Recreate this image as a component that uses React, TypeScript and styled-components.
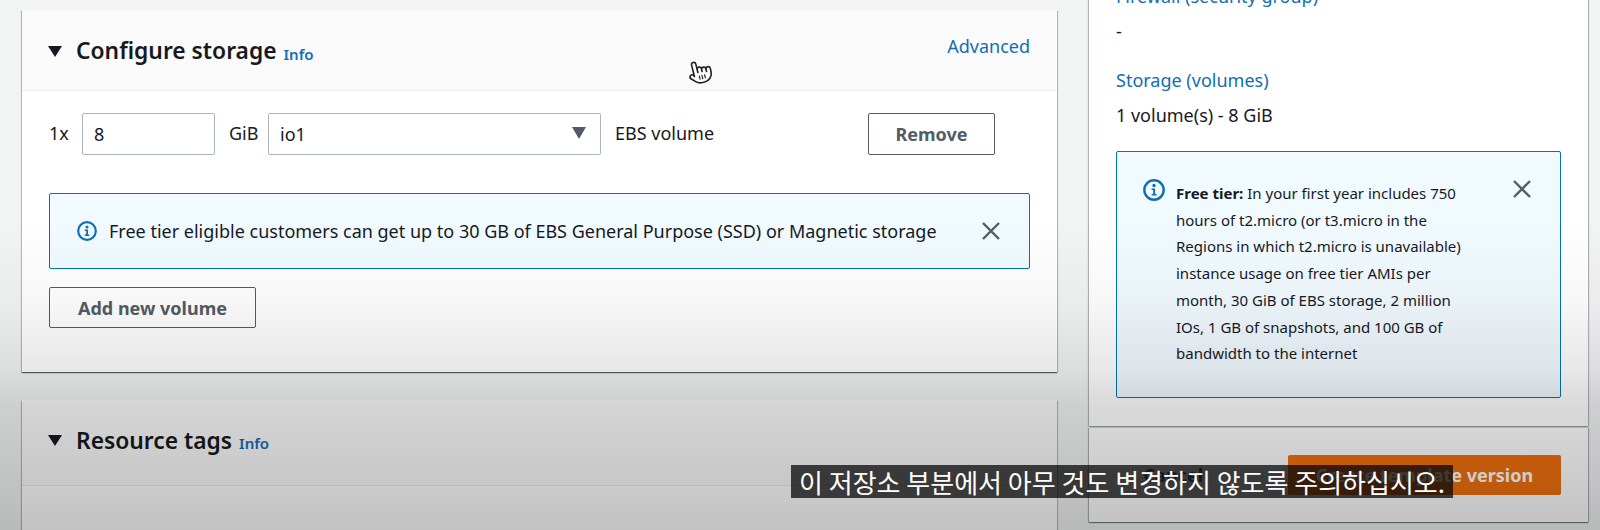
import React from "react";
import styled, { createGlobalStyle } from "styled-components";

const GlobalStyle = createGlobalStyle`
  html, body {
    margin: 0;
    height: 100%;
    background: #f2f3f3;
  }
  * {
    box-sizing: border-box;
  }
`;

const InfoIcon = ({ size = 20 }: { size?: number }) => (
  <svg width={size} height={size} viewBox="0 0 20 20" aria-hidden="true">
    <circle cx="10" cy="10" r="8.8" fill="none" stroke="#0f6fb5" strokeWidth="2.200" />
    <circle cx="10" cy="5.9" r="1.5" fill="#0f6fb5" />
    <path d="M7.8 8.6h3.2v5h1.3v1.500H7.800v-1.500h1.400V10.100H7.800z" fill="#0f6fb5" />
  </svg>
);

const CloseIcon = () => (
  <svg width="20" height="18" viewBox="0 0 20 18" aria-hidden="true">
    <path d="M2 1l16 16M18 1L2 17" fill="none" stroke="#545b64" strokeWidth="2.400" />
  </svg>
);

const HandCursor = () => (
  <svg width="26" height="26" viewBox="0 0 24 24" aria-hidden="true">
    <g transform="rotate(-14 12 12)" fill="#fff" stroke="#222" strokeWidth="1.500" strokeLinecap="round" strokeLinejoin="round">
      <path d="M18 11a2 2 0 1 1 4 0v3a8 8 0 0 1-8 8h-2c-2.800 0-4.500-.86-5.990-2.340l-3.600-3.600a2 2 0 0 1 2.830-2.820L6 14.800V4a2 2 0 0 1 4 0v5a2 2 0 0 1 4 1 2 2 0 0 1 4 1z" />
      <path d="M10 9.500V12M14 10v2M18 11v2" fill="none" />
      <path d="M10.500 15.500v3M13 15.500v3M15.500 15.500v3" fill="none" strokeWidth="1.100" />
    </g>
  </svg>
);

export default function App() {
  return (
    <Page>
      <GlobalStyle />
      <LeftColumn>
        <Card>
          <CardHeader>
            <Caret />
            <Title>Configure storage</Title>
            <InfoLink>Info</InfoLink>
            <AdvancedLink>Advanced</AdvancedLink>
          </CardHeader>
          <CardBody>
            <VolumeRow>
              <RowText>1x</RowText>
              <FieldBox>8</FieldBox>
              <RowText $indent={14}>GiB</RowText>
              <SelectBox>
                io1
                <SelectArrow />
              </SelectBox>
              <RowText $indent={14}>EBS volume</RowText>
              <OutlineButton>Remove</OutlineButton>
            </VolumeRow>
            <WideAlert>
              <InfoIcon />
              <WideAlertText>
                Free tier eligible customers can get up to 30 GB of EBS General Purpose (SSD) or Magnetic storage
              </WideAlertText>
              <CloseIcon />
            </WideAlert>
            <AddButton>Add new volume</AddButton>
          </CardBody>
        </Card>
        <Card>
          <CardHeader $short>
            <Caret />
            <Title>Resource tags</Title>
            <InfoLink>Info</InfoLink>
          </CardHeader>
          <CardBody />
        </Card>
      </LeftColumn>

      <SummaryPanel>
        <SummaryBody>
          <SummaryLabel>Firewall (security group)</SummaryLabel>
          <SummaryValue>-</SummaryValue>
          <SummaryLabel $spaced>Storage (volumes)</SummaryLabel>
          <SummaryValue>1 volume(s) - 8 GiB</SummaryValue>
          <TierAlert>
            <TierIcon>
              <InfoIcon size={22} />
            </TierIcon>
            <TierText>
              <strong>Free tier:</strong> In your first year includes 750 hours of t2.micro (or t3.micro in the
              Regions in which t2.micro is unavailable) instance usage on free tier AMIs per month, 30 GiB of EBS
              storage, 2 million IOs, 1 GB of snapshots, and 100 GB of bandwidth to the internet
            </TierText>
            <TierClose>
              <CloseIcon />
            </TierClose>
          </TierAlert>
        </SummaryBody>
        <SummaryFooter>
          <CancelLink>Cancel</CancelLink>
          <PrimaryButton>Create template version</PrimaryButton>
        </SummaryFooter>
      </SummaryPanel>

      <VideoShade />
      <Pointer>
        <HandCursor />
      </Pointer>
      <Subtitle>이 저장소 부분에서 아무 것도 변경하지 않도록 주의하십시오.</Subtitle>
    </Page>
  );
}

const Page = styled.div`
  position: relative;
  display: flex;
  align-items: flex-start;
  gap: 32px;
  width: 1600px;
  height: 530px;
  padding: 10px 12px 0 22px;
  overflow: hidden;
  background: #f2f3f3;
  color: #16191f;
  font-family: "Noto Sans", "Open Sans", sans-serif;
`;

const LeftColumn = styled.div`
  display: flex;
  flex-direction: column;
  gap: 28px;
  width: 1035px;
  flex-shrink: 0;
`;

const Card = styled.section`
  background: #fff;
  box-shadow: 0 1px 1px rgba(0, 28, 36, 0.5), 1px 1px 1px rgba(0, 28, 36, 0.2), -1px 1px 1px rgba(0, 28, 36, 0.2);
`;

const CardHeader = styled.header<{ $short?: boolean }>`
  position: relative;
  display: flex;
  align-items: center;
  height: ${(p) => (p.$short ? 86 : 81)}px;
  padding: ${(p) => (p.$short ? "0 27px 4px 26px" : "2px 27px 0 26px")};
  background: #fafafa;
  border-bottom: 1px solid #eaeded;
`;

const Caret = styled.span`
  width: 0;
  height: 0;
  margin-right: 14px;
  border-left: 7px solid transparent;
  border-right: 7px solid transparent;
  border-top: 11px solid #16191f;
`;

const Title = styled.h2`
  margin: 0;
  font-size: 22.800px;
  font-weight: 600;
  line-height: 28px;
`;

const InfoLink = styled.a`
  margin: 5px 0 0 7px;
  color: #0f6fb5;
  font-size: 15px;
  font-weight: 600;
`;

const AdvancedLink = styled.a`
  margin: -11px 0 0 auto;
  color: #0f6fb5;
  font-size: 18px;
`;

const CardBody = styled.div`
  min-height: 60px;
  padding: 22px 27px 44px;
`;

const VolumeRow = styled.div`
  display: grid;
  grid-template-columns: 33px 133px 53px 333px 267px 127px;
  align-items: center;
  height: 42px;
`;

const RowText = styled.span<{ $indent?: number }>`
  padding-left: ${(p) => p.$indent ?? 0}px;
  font-size: 18px;
  line-height: 40px;
  align-self: start;
  white-space: nowrap;
`;

const FieldBox = styled.div`
  display: flex;
  align-items: center;
  height: 42px;
  padding-left: 11px;
  background: #fff;
  border: 1px solid #aab7b8;
  border-radius: 2px;
  font-size: 18px;
`;

const SelectBox = styled(FieldBox)`
  justify-content: space-between;
  padding-right: 14px;
`;

const SelectArrow = styled.span`
  width: 0;
  height: 0;
  margin-top: -2px;
  border-left: 7px solid transparent;
  border-right: 7px solid transparent;
  border-top: 12px solid #545b64;
`;

const OutlineButton = styled.button`
  height: 42px;
  padding: 0;
  background: #fff;
  border: 1px solid #545b64;
  border-radius: 2px;
  color: #545b64;
  font-family: inherit;
  font-size: 18px;
  font-weight: 700;
`;

const WideAlert = styled.div`
  display: flex;
  align-items: center;
  height: 76px;
  margin-top: 38px;
  padding: 0 28px 0 27px;
  background: #f1faff;
  border: 1px solid #0073bb;
  border-radius: 2px;
`;

const WideAlertText = styled.span`
  flex: 1;
  margin-left: 12px;
  font-size: 18px;
  white-space: nowrap;
`;

const AddButton = styled(OutlineButton)`
  display: block;
  width: 207px;
  height: 41px;
  margin-top: 18px;
`;

const SummaryPanel = styled.aside`
  width: 499px;
  flex-shrink: 0;
  margin-top: -40px;
`;

const SummaryBody = styled.div`
  padding: 14px 27px 28px;
  background: #fff;
  box-shadow: 1px 0 1px rgba(0, 28, 36, 0.25), -1px 0 1px rgba(0, 28, 36, 0.25), 0 1px 1px rgba(0, 28, 36, 0.3);
`;

const SummaryLabel = styled.div<{ $spaced?: boolean }>`
  margin-top: ${(p) => (p.$spaced ? 25 : 0)}px;
  color: #0f6fb5;
  font-size: 18px;
  line-height: 24px;
`;

const SummaryValue = styled.div`
  margin-top: 11px;
  font-size: 18px;
  line-height: 24px;
`;

const TierAlert = styled.div`
  position: relative;
  height: 247px;
  margin-top: 24px;
  padding: 28px 85px 0 59px;
  background: #f1faff;
  border: 1px solid #0073bb;
  border-radius: 2px;
`;

const TierIcon = styled.span`
  position: absolute;
  top: 27px;
  left: 26px;
  line-height: 0;
`;

const TierClose = styled.span`
  position: absolute;
  top: 28px;
  right: 28px;
  line-height: 0;
`;

const TierText = styled.p`
  margin: 0;
  font-size: 15px;
  line-height: 26.700px;

  strong {
    font-weight: 700;
  }
`;

const SummaryFooter = styled.div`
  display: flex;
  align-items: center;
  justify-content: flex-end;
  gap: 85px;
  height: 94px;
  margin-top: 2px;
  padding: 0 27px;
  background: #fff;
  box-shadow: 1px 0 1px rgba(0, 28, 36, 0.25), -1px 0 1px rgba(0, 28, 36, 0.25), 0 1px 1px rgba(0, 28, 36, 0.5);
`;

const CancelLink = styled.span`
  font-size: 18px;
  font-weight: 700;
  color: #545b64;
`;

const PrimaryButton = styled.button`
  width: 273px;
  height: 40px;
  padding: 0;
  background: #f0700f;
  border: 0;
  border-radius: 2px;
  color: #fff;
  font-family: inherit;
  font-size: 18px;
  font-weight: 700;
`;

const VideoShade = styled.div`
  position: absolute;
  inset: 0;
  pointer-events: none;
  background: linear-gradient(
    to bottom,
    rgba(0, 0, 0, 0) 220px,
    rgba(0, 0, 0, 0.03) 300px,
    rgba(0, 0, 0, 0.09) 370px,
    rgba(0, 0, 0, 0.15) 405px,
    rgba(0, 0, 0, 0.2) 480px,
    rgba(0, 0, 0, 0.24) 530px
  );
`;

const Pointer = styled.div`
  position: absolute;
  left: 687px;
  top: 59px;
  line-height: 0;
`;

const Subtitle = styled.div`
  position: absolute;
  left: 791px;
  top: 465px;
  height: 33px;
  padding: 0 8px;
  background: rgba(8, 8, 8, 0.75);
  color: #fff;
  font-family: "Noto Sans CJK KR", sans-serif;
  font-size: 26px;
  line-height: 33px;
  white-space: nowrap;
`;
